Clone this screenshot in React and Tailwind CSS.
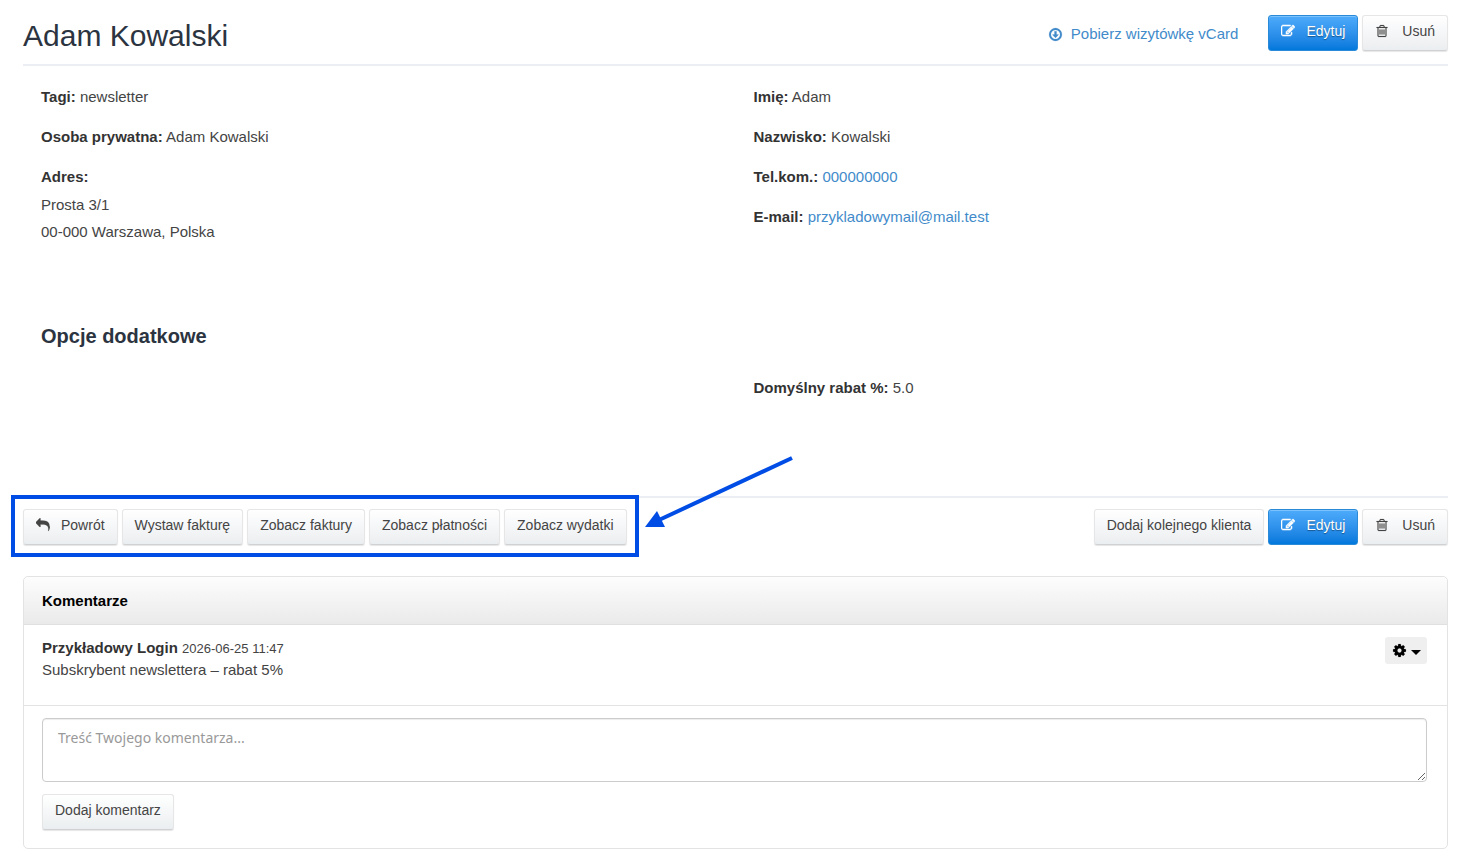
import React, { useState } from 'react'

const icons = {
  download:
    'M1248 928q0 14-10 24l-319 319q-10 9-23 9t-23-9l-320-320q-9-9-9-23 0-13 9.5-22.5t22.5-9.5h192v-352q0-13 9.5-22.5t22.5-9.5h192q13 0 22.5 9.5t9.5 22.5v352h192q14 0 23 9t9 23zm-352-576q-148 0-273 73t-198 198-73 273 73 273 198 198 273 73 273-73 198-198 73-273-73-273-198-198-273-73zm768 544q0 209-103 385.5t-279.5 279.5-385.5 103-385.5-103-279.5-279.5-103-385.5 103-385.5 279.5-279.5 385.5-103 385.5 103 279.5 279.5 103 385.5z',
  edit:
    'M888 1184l116-116-152-152-116 116v56h96v96h56zm440-720q-16-16-33 1l-350 350q-17 17-1 33t33-1l350-350q17-17 1-33zm80 594v190q0 119-84.5 203.5t-203.5 84.5h-832q-119 0-203.5-84.5t-84.5-203.5v-832q0-119 84.5-203.5t203.5-84.5h832q63 0 117 25 15 7 18 23 3 17-9 29l-49 49q-14 14-32 8-23-6-45-6h-832q-66 0-113 47t-47 113v832q0 66 47 113t113 47h832q66 0 113-47t47-113v-126q0-13 9-22l64-64q15-15 35-7t20 29zm-96-738l288 288-672 672h-288v-288zm444 132l-92 92-288-288 92-92q28-28 68-28t68 28l152 152q28 28 28 68t-28 68z',
  trash:
    'M704 736v576q0 14-9 23t-23 9h-64q-14 0-23-9t-9-23v-576q0-14 9-23t23-9h64q14 0 23 9t9 23zm256 0v576q0 14-9 23t-23 9h-64q-14 0-23-9t-9-23v-576q0-14 9-23t23-9h64q14 0 23 9t9 23zm256 0v576q0 14-9 23t-23 9h-64q-14 0-23-9t-9-23v-576q0-14 9-23t23-9h64q14 0 23 9t9 23zm128 724v-948h-896v948q0 22 7 40.5t14.5 27 10.5 8.5h832q3 0 10.5-8.5t14.5-27 7-40.5zm-672-1076h448l-48-117q-7-9-17-11h-317q-10 2-17 11zm928 32v64q0 14-9 23t-23 9h-96v948q0 83-47 143.5t-113 60.5h-832q-66 0-113-58.5t-47-141.5v-952h-96q-14 0-23-9t-9-23v-64q0-14 9-23t23-9h309l70-167q15-37 54-63t79-26h320q40 0 79 26t54 63l70 167h309q14 0 23 9t9 23z',
  reply:
    'M1792 1120q0 166-127 451-3 7-10.5 24t-13.5 30-13 22q-12 17-28 17-15 0-23.5-10t-8.5-25q0-9 2.5-26.5t2.5-23.5q5-68 5-123 0-112-19.5-200.5t-54-153.5-89-112-117-77.5-145.5-45-165-20-187-5.5h-224v256q0 26-19 45t-45 19-45-19l-512-512q-19-19-19-45t19-45l512-512q19-19 45-19t45 19 19 45v256h224q713 0 875 403 53 134 53 333z',
  cog:
    'M1152 896q0-106-75-181t-181-75-181 75-75 181 75 181 181 75 181-75 75-181zm512-109v222q0 12-8 23t-20 13l-185 28q-19 54-39 91 35 50 107 138 10 12 10 25t-9 23q-27 37-99 108t-94 71q-12 0-26-9l-138-108q-44 23-91 38-16 136-29 186-7 28-36 28h-222q-14 0-24.5-8.5t-11.5-21.5l-28-184q-49-16-90-37l-141 107q-10 9-25 9-14 0-25-11-126-114-165-168-7-10-7-23 0-12 8-23 15-21 51-66.5t54-70.5q-27-50-41-99l-183-27q-13-2-21-12.5t-8-23.5v-222q0-12 8-23t19-13l186-28q14-46 39-92-40-57-107-138-10-12-10-24 0-10 9-23 26-36 98.5-107.5t94.5-71.5q13 0 26 10l138 107q44-23 91-38 16-136 29-186 7-28 36-28h222q14 0 24.5 8.5t11.5 21.5l28 184q49 16 90 37l142-107q9-9 24-9 13 0 25 10 129 119 165 170 7 8 7 22 0 12-8 23-15 21-51 66.5t-54 70.5q26 50 41 98l183 28q13 2 21 12.5t8 23.5z',
}

const Icon = ({ name, className }) => (
  <svg viewBox="0 0 1792 1792" fill="currentColor" stroke="currentColor" strokeWidth={name === 'edit' ? 70 : 20} className={className} aria-hidden="true">
    <path d={icons[name]} />
  </svg>
)

const Button = ({ icon, primary, children }) => {
  const look = primary
    ? 'border-[#2a8ad8] bg-linear-to-b from-[#4dabfb] to-[#0078dc] text-white shadow-[inset_0_1px_0_#7cc2fc] text-shadow-[0_1px_1px_#00000066]'
    : 'border-[#e6e6e6] border-b-[#cfd1d3] bg-linear-to-b from-white to-[#ebeef0] text-[#444] shadow-[0_1px_1px_#0000001a]'
  return (
    <button type="button" className={'flex h-9 items-center rounded-[3px] border px-3 pb-1 text-sm whitespace-nowrap cursor-pointer ' + look}>
      {icon && <Icon name={icon} className={'size-3.5 shrink-0 ' + (icon === 'trash' ? 'mr-[13px]' : 'mr-[11px]')} />}
      {children}
    </button>
  )
}

const Field = ({ label, children }) => (
  <p className="mb-5 leading-5">
    <strong className="text-[#333]">{label}:</strong> {children}
  </p>
)

const Header = () => (
  <header className="flex items-start justify-between border-b-2 border-[#ebeff3] pb-[10px]">
    <h1 className="mt-[3px] text-[30px] leading-9 text-[#2b3440]">Adam Kowalski</h1>
    <div className="flex items-center gap-1">
      <a href="#vcard" className="mt-0.5 mr-6.5 flex items-center gap-2 text-[#428bca]">
        <Icon name="download" className="size-[15px]" />
        Pobierz wizytówkę vCard
      </a>
      <Button icon="edit" primary>Edytuj</Button>
      <Button icon="trash">Usuń</Button>
    </div>
  </header>
)

const Details = () => (
  <section className="grid grid-cols-2 pt-[21px]">
    <div className="pl-4.5">
      <Field label="Tagi">newsletter</Field>
      <Field label="Osoba prywatna">Adam Kowalski</Field>
      <p className="leading-5"><strong className="text-[#333]">Adres:</strong></p>
      <address className="mt-1 leading-[27px] not-italic">
        Prosta 3/1<br />
        00-000 Warszawa, Polska
      </address>
    </div>
    <div className="pl-4.5">
      <Field label="Imię">Adam</Field>
      <Field label="Nazwisko">Kowalski</Field>
      <Field label="Tel.kom."><a href="tel:000000000" className="text-[#428bca]">000000000</a></Field>
      <Field label="E-mail"><a href="mailto:przykladowymail@mail.test" className="text-[#428bca]">przykladowymail@mail.test</a></Field>
    </div>
  </section>
)

const Extras = () => (
  <section className="mt-[75px]">
    <h2 className="pl-4.5 text-xl leading-7 font-bold text-[#2b3440]">Opcje dodatkowe</h2>
    <div className="mt-7 grid grid-cols-2">
      <div className="col-start-2 pl-4.5">
        <Field label="Domyślny rabat %">5.0</Field>
      </div>
    </div>
  </section>
)

const Actions = () => (
  <div className="mt-[78px] flex justify-between border-t-2 border-[#ebeff3] pt-[11px]">
    <div className="relative flex gap-1">
      <Button icon="reply">Powrót</Button>
      <Button>Wystaw fakturę</Button>
      <Button>Zobacz faktury</Button>
      <Button>Zobacz płatności</Button>
      <Button>Zobacz wydatki</Button>
      <div className="pointer-events-none absolute -top-3.5 -right-3 -bottom-3 -left-3 border-4 border-[#004de6]" />
      <svg viewBox="0 0 150 74" className="pointer-events-none absolute -top-13.5 left-full ml-[18px] h-[74px] w-[150px]" aria-hidden="true">
        <path d="M147 3L14 65" stroke="#004de6" strokeWidth="4" fill="none" />
        <path d="M0 72L12 56L20 72z" fill="#004de6" />
      </svg>
    </div>
    <div className="flex gap-1">
      <Button>Dodaj kolejnego klienta</Button>
      <Button icon="edit" primary>Edytuj</Button>
      <Button icon="trash">Usuń</Button>
    </div>
  </div>
)

const Comments = () => {
  const [text, setText] = useState('')
  return (
    <section className="mt-[31px] rounded-[5px] border border-[#e3e3e3]">
      <h3 className="rounded-t-[5px] border-b border-[#e0e0e0] bg-linear-to-b from-[#fdfdfd] to-[#eaeaea] pt-3.5 pb-[13px] pl-4.5 leading-5 font-bold text-black">Komentarze</h3>
      <div className="flex items-start justify-between border-b border-[#e3e3e3] pt-3 pr-5 pb-6 pl-4.5">
        <div className="leading-[22px]">
          <p><strong className="text-[#333]">Przykładowy Login</strong> <time className="text-[13px] leading-4">2026-06-25 11:47</time></p>
          <p>Subskrybent newslettera – rabat 5%</p>
        </div>
        <button type="button" aria-label="Opcje komentarza" className="flex h-[27px] w-[42px] items-center justify-center gap-1 rounded-[3px] bg-[#efefef] text-black cursor-pointer">
          <Icon name="cog" className="size-[15px]" />
          <span className="mt-1 border-x-5 border-t-5 border-x-transparent border-t-black" />
        </button>
      </div>
      <form className="pt-3 pr-5 pb-4.5 pl-4.5" onSubmit={(e) => e.preventDefault()}>
        <textarea
          aria-label="Treść komentarza"
          placeholder="Treść Twojego komentarza..."
          value={text}
          onChange={(e) => setText(e.target.value)}
          className="mb-3 block h-16 w-full rounded-[4px] border border-[#ccc] px-[15px] py-2 font-['Noto_Sans',sans-serif] text-sm leading-[22px] placeholder:text-[#999] shadow-[inset_0_1px_1px_#00000013]"
        />
        <Button>Dodaj komentarz</Button>
      </form>
    </section>
  )
}

const App = () => (
  <main className="bg-white pt-[15px] pr-4.5 pb-2 pl-[23px] font-['Liberation_Sans',Arial,sans-serif] text-[15px] text-[#444]">
    <Header />
    <Details />
    <Extras />
    <Actions />
    <Comments />
  </main>
)

export default App
